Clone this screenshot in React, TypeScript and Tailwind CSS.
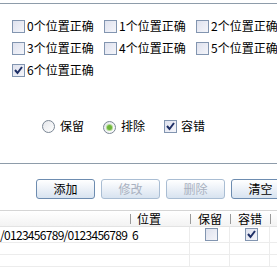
import React from "react";

const font = { fontFamily: '"Noto Sans CJK SC", "Liberation Sans", sans-serif' };

function Box({ checked }: { checked?: boolean }) {
  return (
    <span className="relative inline-block w-[13px] h-[13px] shrink-0 border border-[#8295b0] bg-gradient-to-br from-[#dfe2ee] to-[#f4f5fa]">
      {checked && (
        <svg className="absolute left-[1px] top-[1px]" width="9" height="9" viewBox="0 0 9 9">
          <path d="M1 4 L3.5 7 L8 1" stroke="#1e2f66" strokeWidth="2" fill="none" />
        </svg>
      )}
    </span>
  );
}

function Radio({ checked }: { checked?: boolean }) {
  return (
    <span className="relative inline-flex items-center justify-center w-[13px] h-[13px] shrink-0 rounded-full border border-[#7a8694] bg-gradient-to-br from-[#e4e6ea] to-white">
      {checked && <span className="w-[5px] h-[5px] rounded-full bg-[#6fb43a] ring-1 ring-[#b5dd98]" />}
    </span>
  );
}

function Btn({ label, disabled }: { label: string; disabled?: boolean }) {
  return (
    <div
      className={`w-[59px] h-[20px] shrink-0 rounded-[3px] border flex items-center justify-center text-[12px] bg-gradient-to-b from-white to-[#d8e3f0] ${
        disabled ? "border-[#a9bdd3] text-[#a9b1c0]" : "border-[#6d8cb0] text-black"
      }`}
    >
      {label}
    </div>
  );
}

const items = ["0", "1", "2", "3", "4", "5", "6"];

function Sep() {
  return <span className="w-px h-[10px] bg-[#9a9a9a] shrink-0" />;
}

export default function App() {
  return (
    <div className="w-[277px] h-[270px] overflow-hidden bg-white text-black text-[12px] leading-none" style={font}>
      <div className="w-[320px]">
        <div className="h-[3px]" />
        <div className="border-t border-[#8e9caa]" />
        <div className="pt-[11px] pl-[12px] grid grid-cols-[92px_92px_92px]">
          {items.map((n) => (
            <div key={n} className="h-[22px] flex items-center gap-[2px]">
              <Box checked={n === "6"} />
              <span className="whitespace-nowrap">{n}个位置正确</span>
            </div>
          ))}
        </div>
        <div className="mt-[34px] h-[22px] flex items-center pl-[42px]">
          <Radio />
          <span className="ml-[5px]">保留</span>
          <span className="ml-[19px]"><Radio checked /></span>
          <span className="ml-[5px]">排除</span>
          <span className="ml-[19px] flex"><Box checked /></span>
          <span className="ml-[4px]">容错</span>
        </div>
        <div className="mt-[26px] border-t border-[#8e9caa]" />
        <div className="mt-[15px] flex gap-[6px] pl-[36px]">
          <Btn label="添加" />
          <Btn label="修改" disabled />
          <Btn label="删除" disabled />
          <Btn label="清空" />
        </div>
        <div className="mt-[11px] border-t border-[#d5d5d5]">
          <div className="h-[16px] flex items-center bg-gradient-to-b from-white to-[#f3f3f3] border-b border-[#e3e3e3]">
            <div className="w-[130px]" />
            <div className="w-[60px] flex items-center"><Sep /><span className="ml-[6px]">位置</span></div>
            <div className="w-[40px] flex items-center"><Sep /><span className="ml-[7px]">保留</span></div>
            <div className="w-[40px] flex items-center"><Sep /><span className="ml-[7px]">容错</span></div>
            <div className="w-[40px] flex items-center"><Sep /></div>
          </div>
          <div className="h-[16px] flex items-center border-b border-[#ececec]">
            <div className="w-[130px] shrink-0 whitespace-nowrap tracking-[-0.7px]">/0123456789/0123456789</div>
            <div className="w-[60px] h-full flex items-center pl-[2px] border-r border-[#ececec]">6</div>
            <div className="w-[40px] h-full flex items-center justify-center pl-[4px] border-r border-[#ececec]"><Box /></div>
            <div className="w-[40px] h-full flex items-center justify-center pl-[4px] border-r border-[#ececec]"><Box checked /></div>
          </div>
          <div className="h-[12px] flex border-b border-[#ececec]">
            <div className="w-[190px] border-r border-[#ececec]" />
            <div className="w-[40px] border-r border-[#ececec]" />
            <div className="w-[40px] border-r border-[#ececec]" />
          </div>
          <div className="h-[12px] flex border-b border-[#ececec]">
            <div className="w-[190px] border-r border-[#ececec]" />
            <div className="w-[40px] border-r border-[#ececec]" />
            <div className="w-[40px] border-r border-[#ececec]" />
          </div>
        </div>
      </div>
    </div>
  );
}
